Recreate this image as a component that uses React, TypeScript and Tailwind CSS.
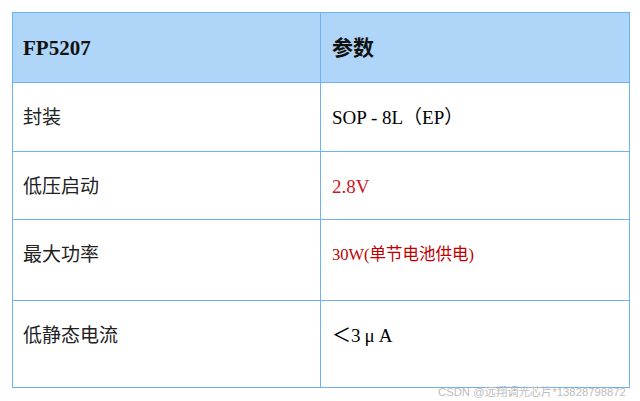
import React from "react";

const cjk = '"Liberation Serif", "Noto Sans CJK SC", serif';

const rows: { k: string; v: React.ReactNode; h: string }[] = [
  { k: "封装", v: <span className="text-black text-[19px]">SOP - 8L（EP）</span>, h: "h-[69px]" },
  { k: "低压启动", v: <span className="text-[#d2141e] text-[19px]">2.8V</span>, h: "h-[68px]" },
  { k: "最大功率", v: <span className="text-[#c00000] text-[16.5px]">30W(单节电池供电)</span>, h: "h-[81px]" },
  {
    k: "低静态电流",
    v: (
      <span className="text-black text-[19px]">
        ＜3<span className="mx-[4px]">μ</span>A
      </span>
    ),
    h: "h-[87px]",
  },
];

export default function App() {
  return (
    <div className="relative w-[640px] h-[401px] bg-white" style={{ fontFamily: cjk }}>
      <div className="pt-[12px] pl-[12px]">
        <table className="border-collapse w-[617px] table-fixed">
          <colgroup>
            <col className="w-[308px]" />
            <col className="w-[309px]" />
          </colgroup>
          <tbody>
            <tr className="h-[70px] bg-[#afd6f8]">
              <td className="border border-[#6cb2f5] align-top pt-[20px] pl-[10px] text-[21px] leading-[30px] font-bold text-[#111]">
                FP5207
              </td>
              <td className="border border-[#6cb2f5] align-top pt-[20px] pl-[11px] text-[21px] leading-[30px] font-bold text-[#111]">
                参数
              </td>
            </tr>
            {rows.map((r) => (
              <tr key={r.k} className={r.h}>
                <td className="border border-[#6cb2f5] align-top pt-[20px] pl-[10px] text-[19px] leading-[30px] text-[#222]">
                  {r.k}
                </td>
                <td className="border border-[#6cb2f5] align-top pt-[20px] pl-[11px] leading-[30px]">
                  {r.v}
                </td>
              </tr>
            ))}
          </tbody>
        </table>
      </div>
      <div
        className="absolute left-[438px] top-[384px] text-[11.3px] leading-[16px] text-[#bdbdbd] whitespace-nowrap"
        style={{ fontFamily: '"Liberation Sans", "Noto Sans CJK SC", sans-serif' }}
      >
        CSDN @远翔调光芯片*13828798872
      </div>
    </div>
  );
}
